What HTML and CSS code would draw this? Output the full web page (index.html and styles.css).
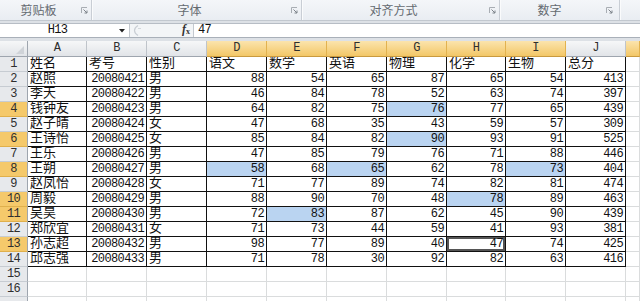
FILE: index.html
```html
<!DOCTYPE html>
<html lang="zh-CN">

<head>
    <meta charset="UTF-8">
    <meta name="viewport" content="width=device-width, initial-scale=1.0">
    <title>成绩表</title>
    <link rel="stylesheet" href="styles.css">
</head>

<body>
    <!-- Ribbon group labels -->
    <div class="ribbon">
        <div class="group g-clip">
            <span class="group-label">剪贴板</span>
            <span class="launcher"><svg width="7" height="7" viewBox="0 0 7 7"><path d="M0.5 6V0.5H6" fill="none" stroke="#a8adb3"/><path d="M2.5 2.5L6 6M6 3.5V6H3.5" fill="none" stroke="#7d838a"/></svg></span>
        </div>
        <div class="group g-font">
            <span class="group-label">字体</span>
            <span class="launcher"><svg width="7" height="7" viewBox="0 0 7 7"><path d="M0.5 6V0.5H6" fill="none" stroke="#a8adb3"/><path d="M2.5 2.5L6 6M6 3.5V6H3.5" fill="none" stroke="#7d838a"/></svg></span>
        </div>
        <div class="group g-align">
            <span class="group-label">对齐方式</span>
            <span class="launcher"><svg width="7" height="7" viewBox="0 0 7 7"><path d="M0.5 6V0.5H6" fill="none" stroke="#a8adb3"/><path d="M2.5 2.5L6 6M6 3.5V6H3.5" fill="none" stroke="#7d838a"/></svg></span>
        </div>
        <div class="group g-num">
            <span class="group-label">数字</span>
            <span class="launcher"><svg width="7" height="7" viewBox="0 0 7 7"><path d="M0.5 6V0.5H6" fill="none" stroke="#a8adb3"/><path d="M2.5 2.5L6 6M6 3.5V6H3.5" fill="none" stroke="#7d838a"/></svg></span>
        </div>
        <div class="group g-rest"></div>
    </div>

    <!-- Name box + formula bar -->
    <div class="formula-bar">
        <div class="fbar">
            <div class="name-box">
                <span class="name">H13</span>
                <span class="drop"><svg width="6" height="4" viewBox="0 0 6 4"><path d="M0 0H6L3 3.5Z" fill="#222"/></svg></span>
            </div>
            <div class="fbar-tools">
                <svg class="grip" width="11" height="13" viewBox="0 0 11 13"><path d="M5 1.5C2.5 3 1.5 5 1.5 6.5S2.5 10 5 11.5" fill="none" stroke="#c9ced4" stroke-width="1.2"/><path d="M5 4.5H8" stroke="#d3d7dc"/></svg>
                <span class="fx"><i>f</i><sub>x</sub></span>
            </div>
            <div class="formula">47</div>
        </div>
    </div>

    <!-- Worksheet -->
    <div class="sheet" id="sheet"></div>

    <script>
        const cols = ['A', 'B', 'C', 'D', 'E', 'F', 'G', 'H', 'I', 'J', 'K'];
        const selCols = ['D', 'E', 'F', 'G', 'H', 'I', 'K'];
        const selRows = [4, 6, 8, 10, 11, 13];
        const picked = ['G4', 'G6', 'D8', 'F8', 'I8', 'H10', 'E11'];
        const active = 'H13';

        const data = [
            ['姓名', '考号', '性别', '语文', '数学', '英语', '物理', '化学', '生物', '总分'],
            ['赵照', 20080421, '男', 88, 54, 65, 87, 65, 54, 413],
            ['李天', 20080422, '男', 46, 84, 78, 52, 63, 74, 397],
            ['钱钟友', 20080423, '男', 64, 82, 75, 76, 77, 65, 439],
            ['赵子晴', 20080424, '女', 47, 68, 35, 43, 59, 57, 309],
            ['王诗怡', 20080425, '女', 85, 84, 82, 90, 93, 91, 525],
            ['王乐', 20080426, '男', 47, 85, 79, 76, 71, 88, 446],
            ['王朔', 20080427, '男', 58, 68, 65, 62, 78, 73, 404],
            ['赵凤怡', 20080428, '女', 71, 77, 89, 74, 82, 81, 474],
            ['周毅', 20080429, '男', 88, 90, 70, 48, 78, 89, 463],
            ['吴昊', 20080430, '男', 72, 83, 87, 62, 45, 90, 439],
            ['郑欣宜', 20080431, '女', 71, 73, 44, 59, 41, 93, 381],
            ['孙志超', 20080432, '男', 98, 77, 89, 40, 47, 74, 425],
            ['邱志强', 20080433, '男', 71, 78, 30, 92, 82, 63, 416]
        ];

        const sheet = document.getElementById('sheet');

        function addCell(cls, text) {
            const div = document.createElement('div');
            div.className = cls;
            if (text !== undefined) div.textContent = text;
            sheet.appendChild(div);
        }

        // Column headers
        addCell('corner');
        cols.forEach(c => addCell('col-head' + (selCols.includes(c) ? ' on' : ''), c === 'K' ? '' : c));

        // Rows (row 17 only peeks in at the bottom edge, so no label)
        for (let r = 1; r <= 17; r++) {
            addCell('row-head' + (selRows.includes(r) ? ' on' : ''), r < 17 ? r : '');
            const row = data[r - 1];
            cols.forEach((c, i) => {
                let cls = 'cell';
                let text;
                if (row && i < 10) {
                    text = row[i];
                    cls += ' t';
                    if (typeof text === 'number') cls += ' num';
                }
                if (picked.includes(c + r)) cls += ' sel';
                if (c + r === active) cls += ' active';
                addCell(cls, text);
            });
        }
    </script>
</body>

</html>
```

FILE: styles.css
```css
/* Global */
* {
    margin: 0;
    padding: 0;
    box-sizing: border-box;
}

body {
    width: 640px;
    height: 301px;
    overflow: hidden;
    background-color: #fff;
    font-family: 'Liberation Mono', 'Noto Sans CJK SC', monospace;
    color: #111;
}

/* Ribbon */
.ribbon {
    display: flex;
    height: 21px;
    background: linear-gradient(#f4f6f9, #e9edf2);
    border-bottom: 1px solid #c2c8cf;
}

.group {
    display: flex;
    align-items: center;
    border-right: 1px solid #c9ced5;
    box-shadow: 1px 0 0 #fafbfc;
}

.g-clip { width: 92px; }
.g-font { width: 210px; }
.g-align { width: 198px; }
.g-num { width: 120px; }

.g-rest {
    flex: 1;
    border-right: none;
}

.group-label {
    flex: 1;
    text-align: center;
    font-family: 'Noto Sans CJK SC', sans-serif;
    font-size: 12px;
    line-height: 20px;
    color: #646a70;
}

.launcher {
    width: 14px;
    display: flex;
    justify-content: center;
    align-items: center;
}

.g-num .launcher {
    width: 20px;
}

/* Formula bar */
.formula-bar {
    height: 20px;
    padding: 2px 0 3px;
    background-color: #dde1e6;
}

.fbar {
    display: flex;
    height: 15px;
    border-top: 1px solid #b7bdc5;
    border-bottom: 1px solid #a9b0b9;
    background-color: #fff;
}

.name-box {
    display: flex;
    align-items: center;
    width: 130px;
    border-right: 1px solid #c4c9cf;
}

.name {
    width: 116px;
    text-align: center;
    font-size: 12px;
    letter-spacing: -0.6px;
    line-height: 13px;
}

.drop {
    width: 14px;
    display: flex;
    justify-content: center;
}

.fbar-tools {
    display: flex;
    align-items: center;
    width: 64px;
    background-color: #f3f5f7;
    border-right: 1px solid #c4c9cf;
}

.grip {
    margin-left: 3px;
}

.fx {
    margin-left: 38px;
    font-family: 'Liberation Serif', serif;
    font-size: 12px;
    font-weight: bold;
    line-height: 13px;
    color: #333;
}

.fx sub {
    font-size: 8px;
    vertical-align: -1px;
}

.formula {
    flex: 1;
    padding-left: 4px;
    font-size: 12px;
    letter-spacing: -0.6px;
    line-height: 13px;
}

/* Worksheet grid */
.sheet {
    display: grid;
    grid-template-columns: 28px 59px 60px 60px 60px 60px 60px 60px 59px 60px 60px 14px;
    grid-template-rows: 16px;
    grid-auto-rows: 15px;
}

.corner,
.col-head,
.row-head {
    background: linear-gradient(#f6f7f8, #e1e4e8);
    border-right: 1px solid #bfc4ca;
    border-bottom: 1px solid #9ea5ae;
    font-size: 12px;
    letter-spacing: -0.6px;
    line-height: 15px;
    text-align: center;
    color: #2e2e2e;
}

.corner {
    position: relative;
    border-right-color: #9ea5ae;
}

/* little triangle of the select-all button */
.corner::after {
    content: '';
    position: absolute;
    right: 3px;
    bottom: 2px;
    border-left: 8px solid transparent;
    border-bottom: 8px solid #cfd3d8;
}

.col-head.on {
    background: linear-gradient(#fbe4ad, #f3c767);
    border-right-color: #e2b24f;
    border-bottom-color: #c99a3f;
}

.row-head {
    background: #e7e9ec;
    border-right-color: #9ea5ae;
    border-bottom-color: #c7ccd2;
    line-height: 14px;
}

.row-head.on {
    background: #f5c96b;
    border-bottom-color: #e0b04c;
}

.cell {
    border-right: 1px solid #dadcdd;
    border-bottom: 1px solid #dadcdd;
    padding: 0 2px;
    font-size: 13px;
    line-height: 14px;
    white-space: nowrap;
    overflow: hidden;
}

.cell.t {
    border-right-color: #111;
    border-bottom-color: #111;
}

.cell.num {
    text-align: right;
    font-size: 12px;
    letter-spacing: -0.6px;
}

.cell.sel {
    background-color: #bad4f1;
}

.cell.active {
    box-shadow: inset 0 0 0 2px #555;
}
```
